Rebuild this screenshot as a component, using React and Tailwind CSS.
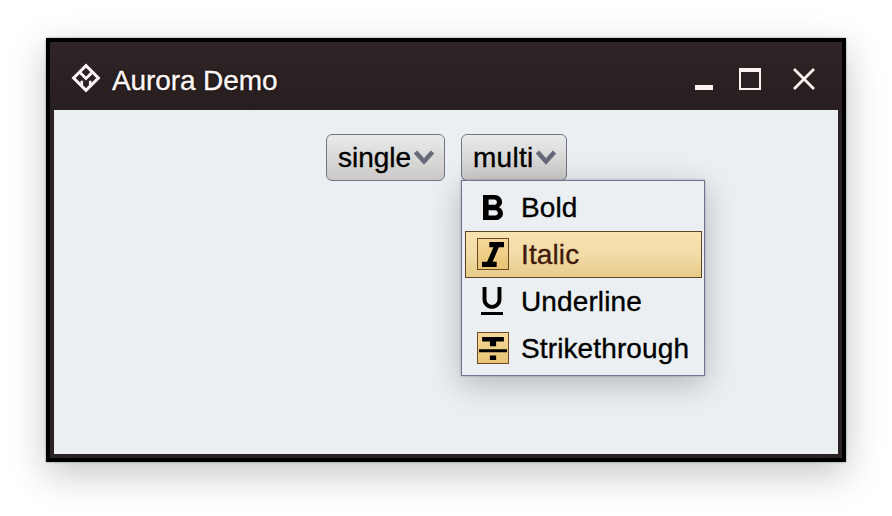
const BoldIcon = () => (
  <svg className="h-[25px] w-5" viewBox="7 4 10.75 14" preserveAspectRatio="none">
    <path d="M15.6 10.79c.97-.67 1.65-1.77 1.65-2.79 0-2.26-1.75-4-4-4H7v14h7.04c2.09 0 3.71-1.7 3.71-3.79 0-1.52-.86-2.82-2.15-3.42zM10 6.5h3c.83 0 1.5.67 1.5 1.5s-.67 1.5-1.5 1.5h-3v-3zm3.5 9H10v-3h3.5c.83 0 1.5.67 1.5 1.5s-.67 1.5-1.5 1.5z" />
  </svg>
);

const ItalicIcon = () => (
  <svg className="h-[25px] w-[22px]" viewBox="6 4 12 14" preserveAspectRatio="none">
    <path d="M10 4v3h2.21l-3.42 8H6v3h8v-3h-2.21l3.42-8H18V4z" />
  </svg>
);

const UnderlineIcon = () => (
  <svg className="-ml-[2px] h-7 w-[22px]" viewBox="5 3 14 18" preserveAspectRatio="none">
    <path d="M12 17c3.31 0 6-2.69 6-6V3h-2.5v8c0 1.93-1.57 3.5-3.5 3.5S8.5 12.93 8.5 11V3H6v8c0 3.31 2.69 6 6 6zm-7 2v2h14v-2H5z" />
  </svg>
);

const StrikeIcon = () => (
  <svg className="h-[23px] w-7" viewBox="3 4 18 15" preserveAspectRatio="none">
    <path d="M10 19h4v-3h-4v3zM5 4v3h5v3h4V7h5V4H5zM3 14h18v-2H3v2z" />
  </svg>
);

const items = [
  { label: "Bold", Icon: BoldIcon, on: false },
  { label: "Italic", Icon: ItalicIcon, on: true, active: true },
  { label: "Underline", Icon: UnderlineIcon, on: false },
  { label: "Strikethrough", Icon: StrikeIcon, on: true },
];

function MenuItem({ label, Icon, on, active }) {
  return (
    <div
      className={`flex h-[47px] items-start border pl-[11px] pt-[6px] ${
        active
          ? "border-[#5f4324] bg-linear-to-b from-[#f8e3b2] via-[#f1dba6] to-[#e7cb89] text-[#421a0c]"
          : "border-transparent text-black"
      }`}
    >
      <span
        className={`flex size-8 shrink-0 items-center justify-center border ${
          on ? "border-[#6b4826] bg-linear-to-b from-[#f6d898] to-[#e8c474]" : "border-transparent"
        }`}
      >
        <span className="flex fill-black">
          <Icon />
        </span>
      </span>
      <span className="ml-3 mt-px whitespace-nowrap leading-8 tracking-[0.12px]">{label}</span>
    </div>
  );
}

function ComboButton({ label, width, tracking, children }) {
  return (
    <div className={`relative h-[47px] ${width}`}>
      <button className="flex h-full w-full items-center rounded-md border border-[#73748a] bg-linear-to-b from-[#e9ebeb] via-[#d9d9d8] to-[#cccac8] pl-[11px] text-black">
        <span className={`whitespace-nowrap leading-8 ${tracking}`}>{label}</span>
        <svg className="ml-auto mr-[10px] h-[15px] w-5 shrink-0" viewBox="0 0 20 15" fill="none" stroke="#67687a" strokeWidth="4.5">
          <path d="M1.500 2l8.500 9.500L18.500 2" />
        </svg>
      </button>
      {children}
    </div>
  );
}

export default function App() {
  return (
    <div className="h-[516px] w-[892px] overflow-hidden bg-white pl-[46px] pt-[38px] font-['Liberation_Sans',Arial,sans-serif] text-[28px] [-webkit-text-stroke:0.35px_currentColor]">
      <div className="flex h-[424px] w-[800px] flex-col border-4 border-black bg-[#2b2223] shadow-[0_12px_36px_rgba(0,0,0,0.23),0_0_2px_rgba(0,0,0,0.4)]">
        <header className="flex h-[68px] shrink-0 items-center bg-linear-to-b from-[#302526] to-[#281e1f] pl-[21px] text-[#fdf6f6]">
          <svg className="mt-1 size-[30px]" viewBox="0 0 30 30" fill="none" stroke="#fdf6f6">
            <path d="M15 2.600L27.400 15 15 27.400 2.600 15z" strokeWidth="3" />
            <path d="M9 9.500l6 6 6-6" strokeWidth="2.800" />
            <path d="M10.800 17.800v5M19.200 17.800v5" strokeWidth="2.600" />
          </svg>
          <h1 className="ml-[11px] mt-[10px] flex-1 leading-8 tracking-[-0.1px] [text-shadow:0_0_3px_#000]">Aurora Demo</h1>
          <svg className="mr-[25px] mt-[6px] h-6 w-[124px]" viewBox="0 0 124 24" fill="none" stroke="#fdf1f1">
            <path d="M2 20.500h18" strokeWidth="5" />
            <path d="M47 2v20h20V2" strokeWidth="2" />
            <path d="M46 3h22" strokeWidth="4" />
            <path d="M101 2l20 20M121 2l-20 20" strokeWidth="2.800" />
          </svg>
        </header>
        <main className="mx-1 mb-1 flex flex-1 items-start bg-[#ebeff2] pl-[272px] pt-6">
          <ComboButton label="single" width="w-[119px]" tracking="tracking-normal" />
          <div className="w-4" />
          <ComboButton label="multi" width="w-[106px]" tracking="tracking-[0.3px]">
            <div className="absolute left-0 top-[46px] w-[244px] border border-[#73748f] bg-[#ebeff2] py-[3px] pl-[3px] pr-[2px] shadow-[0_8px_30px_rgba(0,0,0,0.24),0_0_2px_rgba(0,0,0,0.3)]">
              {items.map((item) => (
                <MenuItem key={item.label} {...item} />
              ))}
            </div>
          </ComboButton>
        </main>
      </div>
    </div>
  );
}
